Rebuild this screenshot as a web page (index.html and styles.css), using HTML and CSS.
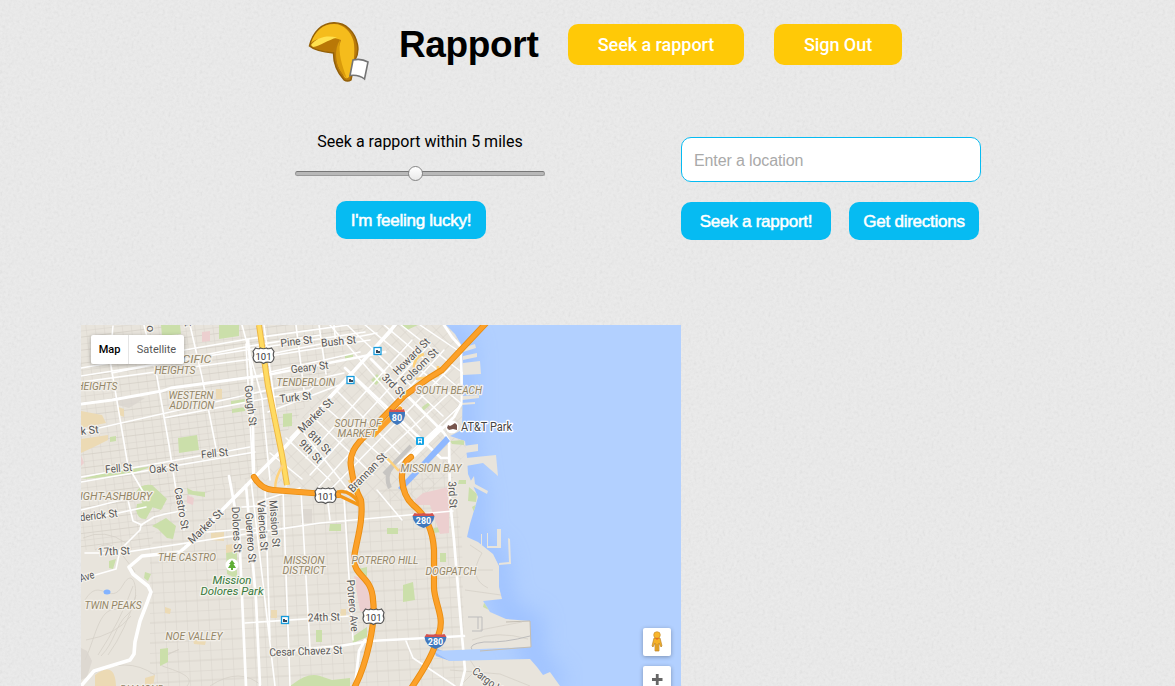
FILE: index.html
```html
<!DOCTYPE html>
<html lang="en">
<head>
<meta charset="utf-8">
<title>Rapport</title>
<link rel="stylesheet" href="styles.css">
</head>
<body>
<header class="header">
  <svg class="logo" viewBox="0 0 62 62" width="62" height="62">
    <path d="M1.500 25C5 11 14 1.800 26 1.800c12 0 21 9 23.500 22 1 6 0 11-2.500 15l-4 20q-3.500 2.500-7 0C28 50 25.500 42 25.500 32 16 31 6 29 1.500 25z" fill="#b97a0a" stroke="#936008" stroke-width="1.500"/>
    <path d="M3 22C7 10 15 3 26 3c10 0 17 8 19.500 17 2 9 .5 26-4.500 36-3 3-5 0-6-3-6-8-7-15-5-24l3-10C23 15 8 17 3 22z" fill="#f5bc1c"/>
    <path d="M2.500 24C10 18 20 16 31 19l-7 11C15 29 7 28 2.500 24z" fill="#b97807"/>
    <path d="M3 24C9 16 19 14 29 16.500 20 19 12 25 5 26z" fill="#ffe14f"/>
    <path d="M32 19C26 28 27 42 34 52l5 6C34 44 30 33 32 19z" fill="#d99b0b"/>
    <path d="M45 39Q53 37 60 41L56.500 58Q51 53.500 42 54.500z" fill="#fff" stroke="#747474" stroke-width="1.600"/>
  </svg>
  <h1 class="brand">Rapport</h1>
  <nav class="nav"><a class="nav-btn seek">Seek a rapport</a><a class="nav-btn out">Sign Out</a></nav>
</header>
<section class="controls">
  <div class="range-col">
    <p class="range-label">Seek a rapport within 5 miles</p>
    <div class="track"><div class="thumb"></div></div>
    <button class="btn lucky">I'm feeling lucky!</button>
  </div>
  <div class="place-col">
    <input class="place" placeholder="Enter a location">
    <div class="actions"><button class="btn wide">Seek a rapport!</button><button class="btn dir">Get directions</button></div>
  </div>
</section>
<main class="map">
<svg class="tiles" viewBox="81 325 600 361" width="600" height="361">
  <defs>
    <pattern id="gw" width="9" height="13" patternUnits="userSpaceOnUse" patternTransform="rotate(-7)"><path d="M0 0H9M0 6.500H9M0 0V13" class="minor"/></pattern>
    <pattern id="gs" width="11" height="20" patternUnits="userSpaceOnUse" patternTransform="rotate(-3)"><path d="M0 0H11M0 10H11M0 0V20" class="minor"/></pattern>
    <pattern id="gd" width="12" height="10" patternUnits="userSpaceOnUse" patternTransform="rotate(-44)"><path d="M0 0H12M0 0V10" class="minor"/></pattern>
    <filter id="soft" x="-20%" y="-20%" width="140%" height="140%"><feGaussianBlur stdDeviation="12"/></filter>
    <clipPath id="landclip"><path d="M81 325H446L455 334 462 346 463 374 462 430 450 436 465 441 467 457 468 474 478 497 476 504 470 524 467 537 478 542 493 554 499 566 499 587 502 599 483 601 490 612 506 619 530 621 531 647 433 651 450 661 530 659 537 667 543 675 550 672 560 686H81z"/></clipPath>
  </defs>
  <rect x="81" y="325" width="600" height="361" fill="#b2d0ff"/>
  <path d="M446 325L463 346V430L470 484 475 504 468 537 495 555 501 599 507 620 531 622 531 659 560 686" fill="none" stroke="#86b0ff" stroke-width="18" opacity=".6" filter="url(#soft)"/>
  <g fill="#e8e4dc">
    <path d="M81 325H446L455 334 462 346 463 374 462 430 450 436 465 441 467 457 468 474 478 497 476 504 470 524 467 537 478 542 493 554 499 566 499 587 502 599 483 601 490 612 506 619 530 621 531 647 433 651 450 661 530 659 537 667 543 675 550 672 560 686H81z"/>
    <path d="M462 348l13-4 1 4-13 4zM463 356l14-3v4l-14 3zM463 363l17-2 1 13-18 1zM462 396l17-1v3l-17 2zM461 403l14-1v2l-14 1zM463 446l15-2v7l-13 2zM466 458l30-3 2 21-15-13-17 3zM470 482l4-6 1 8 13 7-1 3-15-8z"/>
    <path d="M497 529h4v19h-14v-2h10zM481 534h1v13h-1zM487 533h1v13h-1zM508 538l2 1 1 25-12 1v-2l10-1z"/>
  </g>
  <path d="M530 621l1 26-51 4M506 622l24-1" fill="none" stroke="#c3bdb2"/>
  <g clip-path="url(#landclip)">
    <path d="M81 325H365L255 475 160 510 150 550H81z" fill="url(#gw)"/>
    <path d="M365 325H470V450L420 500 360 500 260 480z" fill="url(#gd)"/>
    <path d="M150 550L165 505 255 475 280 495 360 500 450 455 462 540 465 686H150z" fill="url(#gs)"/>
    <g fill="none" class="minor">
      <path d="M95 550q14-12 25 2t15 20M85 600c15-25 25 8 38-15s18 18 5 29-13 28-27 42M85 660c12-26 14-56 36-50M98 655q22-33 35-69M108 655q18-25 28-60M83 538q22-10 43 5M86 640q30-5 45-24M91 675q35-20 64 0M165 655c40-15-22 5 0 12s28 12 22 19M210 686q30-20 52 0M470 545l12 8q-15 25 6 35M465 570h28M465 590l36 5M480 630l42-8M472 640q25-10 56-1M470 660l15 22M450 670l50 4 30 12M460 686l20-20"/>
    </g>
    <path d="M468 617h14v14h-10M478 617v12M472 650q-4-6 12-8 20 1 46-6" fill="none" stroke="#bdbcbc"/>
    <g fill="#cbdfaa">
      <path d="M161 325h19l1 9-19 2zM219 325h20v11l-20 3zM178 438l19-3 2 15-20 3zM231 401l14-2v4l-14 2zM232 409l13-2v4l-13 2zM136 492q5-9 16-7l15 14-6 11-18-6zM137 504l19-3-10 18q-8 1-10-9zM152 526l14-8 10 8-3 13-6-1-9-9zM110 437l6-1v5l-6 1zM226 552l11-1v28l-10-5zM145 572l6 2-3 7-4-3zM109 561l7-2-3 10-4-1zM160 649l8-1v14l-8 4zM283 414l9-1v13l-9 1zM345 355l8-1v5l-8 2zM400 325h18l-11 5zM371 380l6-6 5 5-6 6zM330 524h11v7h-12zM387 528h11v6h-11zM403 585l10-3 2 18-12 2zM440 553h6v9h-6zM431 529l12-3v6l-11 1zM316 630h6v12h-6zM352 637l15-10v10l-14 6zM358 569l9-2v9h-8zM293 684q15-12 27-8l12 4 18-2v8h-60zM450 441l14-1v5l-12-1zM459 480h7v4h-8zM469 487l8 7-1 8-8-1zM477 504l-3 8-2-5zM422 407l7-5 1 3-7 6zM187 488l6 3 12 1v5l-17-3zM484 603l6 2 1 6-8-4z"/>
      <path d="M81 479l27-7 46-6-18 6-40 6z"/>
    </g>
    <g fill="#ecdab4"><path d="M81 411l21 4 4 8-25 5zM81 439l27-4v5l-12 6-15 7zM216 389h6v10h-6zM118 407l6 2v8l-5-2zM211 533l13-1v9l-13-1zM226 545l7-1v8l-7 1zM165 607l6 2-1 5-5-1zM193 640l13 1-1 4-11-1zM95 675q20-15 21 11H95zM145 678l10-3-2 11h-8zM271 610h6v8h-6zM341 609h5v7h-6z"/></g>
    <g fill="#eccfcf"><path d="M202 332l8-1v10l-8 1zM187 495l7 3-1 7-6-2zM415 500l8-7 26-6v46l-9 1-10-29h-15zM354 576l14 4 4 34-12-3zM81 455l3 8-3 3z"/></g>
    <path d="M81 648l6 3 5 10-5 16-6 3zM114 397l19-1 12 2-16 10-11-3zM302 509h10v14h-11z" fill="#d9d5ce" opacity=".8"/>
    <path d="M436 656L433 647 448 653 486 650V659L450 661z" fill="#95bdff"/>
    <g fill="none" stroke="#fff" stroke-linecap="round" stroke-linejoin="round">
      <g stroke-width="1.600">
        <path d="M81 368L248 339 348 325M81 376L246 350 365 332M81 382L245 360 370 340M112 373L250 346 320 335M113 326L110 360 128 466 148 500M144 325L157 377 169 445 176 490 184 530M190 325L202 377 216 448M246 344L253 478M242 325L262 398 270 480M264 325L286 486M164 418L310 390 324 378M81 432L344 373M296 325L304 390M319 325L326 374M334 325L336 346M275 353L377 333M261 374L360 352M268 412L342 384"/>
        <path d="M81 482L255 452M81 477L250 447M81 521L146 507M81 510L130 498M85 553H120L320 523 453 511M207 532L260 528M251 480L275 686M265 485L270 640M283 490L290 686M301 490L310 648M327 495L330 520M344 498L353 640M258 502L300 488M242 507L278 505M81 579L116 569 120 550 140 530 141 525 154 517 165 514 186 510M128 500L133 521 142 525M245 623L350 616M406 641L413 658 455 686"/>
      </g>
      <g stroke-width="1.500">
        <path d="M330 325L421 430M347 325L443 416M365 325L462 404M384 325L466 394M401 325L464 374M420 325L463 354M311 415L373 475M298 426L350 492M322 404L390 464M337 391L400 454M351 375L420 444M286 438L330 480M270 453L302 479M412 340L306 458M430 344L310 475M444 350L318 488M450 368L330 490M459 384L344 491M462 404L398 464M392 331L290 438M377 490L402 520"/>
      </g>
      <path d="M81 404L112 400 162 391 171 388 267 375 385 352" stroke-width="2.800"/>
      <path d="M81 686L94 671 130 660 134 654 135 642 140 621 147 603 151 592 148 586 133 574 129 567 142 556 180 552 188 545 232 500 285 447 391 330 395 325" stroke-width="3.600"/>
      <path d="M229 476L239 530 246 686M246 485L256 600 260 686M248 340L252 380 254 478M345 368L441 458H449M371 359L444 433M274 652L340 646 370 641 464 636M444 325L452 337 461 347 462 402 454 417 408 462M444 433L449 441 450 500 454 540 462 636 465 670 461 686M365 640L359 651 355 686" stroke-width="2.700"/>
      <path d="M440 428L413 455" stroke-width="5"/>
    </g>
    <path d="M384 474l27-28M390 488q-6-12 3-22" stroke="#c7c5c2" stroke-width="4" fill="none"/>
    <path d="M398 488L446 436 450 441 402 491z" fill="#8fb8ff"/>
    <g fill="none" stroke-linejoin="round">
      <path d="M259 325L268 386 282 455 287 485" stroke="#edb746" stroke-width="6"/>
      <path d="M259 325L268 386 282 455 287 485" stroke="#ffdb62" stroke-width="4"/>
      <path d="M275 490Q275 477 283 465M349 480L360 498 355 490 360 482M386 457L399 471M414 370Q413 357 424 354M416 379L438 376 438 366" stroke="#ffd27b" stroke-width="2.500"/>
    </g>
  </g>
  <g fill="none" stroke-linejoin="round" stroke-linecap="round">
    <path d="M488 321L442 370 429 378 404 396 368 433C354 446 349 455 351 467Q354 488 361 500C364 522 355 545 354 559C354 577 372 576 373 600C376 622 367 665 353 690M254 477Q261 489 273 490L338 495M411 457Q401 464 402 479Q403 496 413 505C427 516 433 533 434 550V587C434 602 445 617 439 633C435 651 425 668 410 690" stroke="#e98d11" stroke-width="6.200"/>
    <path d="M338 495L359 505M338 492Q348 489 359 502" stroke="#f39718" stroke-width="3.500"/>
    <path d="M488 321L442 370 429 378 404 396 368 433C354 446 349 455 351 467Q354 488 361 500C364 522 355 545 354 559C354 577 372 576 373 600C376 622 367 665 353 690M254 477Q261 489 273 490L338 495M411 457Q401 464 402 479Q403 496 413 505C427 516 433 533 434 550V587C434 602 445 617 439 633C435 651 425 668 410 690" stroke="#fca129" stroke-width="4.400"/>
    <path d="M374 435L400 409" stroke="#fca129" stroke-width="5"/>
  </g>
  <ellipse cx="107" cy="592" rx="3.500" ry="2.500" fill="#83b3ff"/>

  <g class="street">
    <text transform="translate(297 345) rotate(-7)" textLength="32" lengthAdjust="spacingAndGlyphs">Pine St</text>
    <text transform="translate(339 345) rotate(-6)" textLength="35" lengthAdjust="spacingAndGlyphs">Bush St</text>
    <text transform="translate(310 371) rotate(-7)" textLength="38" lengthAdjust="spacingAndGlyphs">Geary St</text>
    <text transform="translate(296 401) rotate(-6)" textLength="32" lengthAdjust="spacingAndGlyphs">Turk St</text>
    <text transform="translate(318 418) rotate(-44)" textLength="44" lengthAdjust="spacingAndGlyphs">Market St</text>
    <text transform="translate(317 445) rotate(45)" textLength="28" lengthAdjust="spacingAndGlyphs">8th St</text>
    <text transform="translate(308 454) rotate(45)" textLength="28" lengthAdjust="spacingAndGlyphs">9th St</text>
    <text transform="translate(414 359) rotate(-45)" textLength="47" lengthAdjust="spacingAndGlyphs">Howard St</text>
    <text transform="translate(422 369) rotate(-44)" textLength="47" lengthAdjust="spacingAndGlyphs">Folsom St</text>
    <text transform="translate(391 388) rotate(45)" textLength="28" lengthAdjust="spacingAndGlyphs">3rd St</text>
    <text transform="translate(370 475) rotate(-46)" textLength="50" lengthAdjust="spacingAndGlyphs">Brannan St</text>
    <text transform="translate(449 495) rotate(87)" textLength="27" lengthAdjust="spacingAndGlyphs">3rd St</text>
    <text transform="translate(247 406) rotate(83)" textLength="41" lengthAdjust="spacingAndGlyphs">Gough St</text>
    <text transform="translate(215 457) rotate(-6)" textLength="27" lengthAdjust="spacingAndGlyphs">Fell St</text>
    <text transform="translate(119 472) rotate(-5)" textLength="27" lengthAdjust="spacingAndGlyphs">Fell St</text>
    <text transform="translate(164 472) rotate(-5)" textLength="29" lengthAdjust="spacingAndGlyphs">Oak St</text>
    <text transform="translate(90 434) rotate(-6)" textLength="18" lengthAdjust="spacingAndGlyphs">k St</text>
    <text transform="translate(178 509) rotate(80)" textLength="42" lengthAdjust="spacingAndGlyphs">Castro St</text>
    <text transform="translate(208 529) rotate(-44)" textLength="44" lengthAdjust="spacingAndGlyphs">Market St</text>
    <text transform="translate(99 519) rotate(-7)" textLength="38" lengthAdjust="spacingAndGlyphs">derick St</text>
    <text transform="translate(114 555) rotate(-3)" textLength="32" lengthAdjust="spacingAndGlyphs">17th St</text>
    <text transform="translate(88 580) rotate(-18)" textLength="15" lengthAdjust="spacingAndGlyphs">Ave</text>
    <text transform="translate(233 530) rotate(87)" textLength="46" lengthAdjust="spacingAndGlyphs">Dolores St</text>
    <text transform="translate(247 538) rotate(86)" textLength="50" lengthAdjust="spacingAndGlyphs">Guerrero St</text>
    <text transform="translate(259 526) rotate(86)" textLength="50" lengthAdjust="spacingAndGlyphs">Valencia St</text>
    <text transform="translate(271 524) rotate(86)" textLength="47" lengthAdjust="spacingAndGlyphs">Mission St</text>
    <text transform="translate(324 621) rotate(-2)" textLength="32" lengthAdjust="spacingAndGlyphs">24th St</text>
    <text transform="translate(306 655) rotate(-2)" textLength="73" lengthAdjust="spacingAndGlyphs">Cesar Chavez St</text>
    <text transform="translate(349 606) rotate(85)" textLength="52" lengthAdjust="spacingAndGlyphs">Potrero Ave</text>
    <text transform="translate(485 683) rotate(37)" textLength="34" lengthAdjust="spacingAndGlyphs">Cargo V</text>
    <text transform="translate(147 327)  rotate(85)" textLength="11" lengthAdjust="spacingAndGlyphs">ro</text>
    <text transform="translate(185 325) rotate(85)" textLength="4">t</text>
  </g>
  <g class="area">
    <text x="193" y="363" textLength="37" lengthAdjust="spacingAndGlyphs">ACIFIC</text><text x="175" y="374" textLength="41" lengthAdjust="spacingAndGlyphs">HEIGHTS</text>
    <text x="97" y="390" textLength="41" lengthAdjust="spacingAndGlyphs">HEIGHTS</text>
    <text x="191" y="399" textLength="45" lengthAdjust="spacingAndGlyphs">WESTERN</text><text x="192" y="409" textLength="45" lengthAdjust="spacingAndGlyphs">ADDITION</text>
    <text x="306" y="386" textLength="59" lengthAdjust="spacingAndGlyphs">TENDERLOIN</text>
    <text x="449" y="394" textLength="66" lengthAdjust="spacingAndGlyphs">SOUTH BEACH</text>
    <text x="358" y="427" textLength="47" lengthAdjust="spacingAndGlyphs">SOUTH OF</text><text x="357" y="437" textLength="39" lengthAdjust="spacingAndGlyphs">MARKET</text>
    <text x="431" y="472" textLength="61" lengthAdjust="spacingAndGlyphs">MISSION BAY</text>
    <text x="116" y="500" textLength="72" lengthAdjust="spacingAndGlyphs">IGHT-ASHBURY</text>
    <text x="187" y="561" textLength="58" lengthAdjust="spacingAndGlyphs">THE CASTRO</text>
    <text x="113" y="609" textLength="57" lengthAdjust="spacingAndGlyphs">TWIN PEAKS</text>
    <text x="194" y="640" textLength="57" lengthAdjust="spacingAndGlyphs">NOE VALLEY</text>
    <text x="304" y="564" textLength="41" lengthAdjust="spacingAndGlyphs">MISSION</text><text x="304" y="574" textLength="43" lengthAdjust="spacingAndGlyphs">DISTRICT</text>
    <text x="385" y="564" textLength="67" lengthAdjust="spacingAndGlyphs">POTRERO HILL</text>
    <text x="451" y="575" textLength="51" lengthAdjust="spacingAndGlyphs">DOGPATCH</text>
    <text x="142" y="693" textLength="44" lengthAdjust="spacingAndGlyphs">DIAMOND</text>
  </g>
  <g class="park"><text x="232" y="584" textLength="39" lengthAdjust="spacingAndGlyphs">Mission</text><text x="232" y="595" textLength="63" lengthAdjust="spacingAndGlyphs">Dolores Park</text></g>
  <text class="poi" x="461" y="431" textLength="51" lengthAdjust="spacingAndGlyphs">AT&amp;T Park</text>

  <circle cx="452" cy="427" r="6.500" fill="#fff"/><path d="M448 425l2 1 2-1 3-2 2 2v5l-4-1-4 1-2-2z" fill="#76544c"/>
  <circle cx="232" cy="565" r="6.500" fill="#fff"/><path d="M232 560l3 4h-1.500l2.500 4h-3v2h-2v-2h-3l2.500-4H229z" fill="#5fae35"/>
  <g fill="#fff" stroke="#169bdc" stroke-width="1.300"><rect x="374" y="347.500" width="7" height="7"/><rect x="347" y="376.500" width="7" height="7"/><rect x="281.500" y="616.500" width="7" height="7"/></g>
  <path d="M376 350h2v1h2v2h-4zM349 379h2v1h2v2h-4zM283 619h2v1h2v2h-4z" fill="#38495b"/>
  <rect x="416" y="437" width="8" height="8" rx="1" fill="#16a5e6"/><path d="M418 438.500h4v5h-1v-1h-2v1h-1z" fill="#fff"/><path d="M418.700 439.500h2.600v1.500h-2.600z" fill="#16a5e6"/>

  <g class="us">
    <g transform="translate(263.500 355.500)"><path d="M-8-7.500Q-5-6-3-7.500 0-6 3-7.500 5-6 8-7.500L10.500-4Q9-1 10.500 2 10 6 7 7 3 6 0 8-3 6-7 7-10 6-10.500 2-9-1-10.500-4z"/><text y="4">101</text></g>
    <g transform="translate(325.500 495.500)"><path d="M-8-7.500Q-5-6-3-7.500 0-6 3-7.500 5-6 8-7.500L10.500-4Q9-1 10.500 2 10 6 7 7 3 6 0 8-3 6-7 7-10 6-10.500 2-9-1-10.500-4z"/><text y="4">101</text></g>
    <g transform="translate(373.500 616.500)"><path d="M-8-7.500Q-5-6-3-7.500 0-6 3-7.500 5-6 8-7.500L10.500-4Q9-1 10.500 2 10 6 7 7 3 6 0 8-3 6-7 7-10 6-10.500 2-9-1-10.500-4z"/><text y="4">101</text></g>
  </g>
  <g class="interstate">
    <g transform="translate(397 417)"><path class="shield" d="M-8-5H8Q9 4 0 8-9 4-8-5z"/><path class="cap" d="M-7-8Q-3-6 0-8 3-6 7-8L8-5H-8z"/><text y="4">80</text></g>
    <g transform="translate(423.500 520)"><path class="shield" d="M-11-4H11Q10 5 0 8-10 5-11-4z"/><path class="cap" d="M-9-7Q-4-6 0-7 4-6 9-7L11-4H-11z"/><text y="4">280</text></g>
    <g transform="translate(435.500 641)"><path class="shield" d="M-11-4H11Q10 5 0 8-10 5-11-4z"/><path class="cap" d="M-9-7Q-4-6 0-7 4-6 9-7L11-4H-11z"/><text y="4">280</text></g>
  </g>
</svg>
  <div class="map-type"><span class="type active">Map</span><span class="type sat">Satellite</span></div>
  <div class="map-tools">
    <div class="tool"><svg viewBox="0 0 28 28" width="28" height="28"><path d="M11 10h6l2 8-1 1-2-4v8h-4v-8l-2 4-1-1z" fill="#f5b126" stroke="#b9822b" stroke-width=".7"/><circle cx="14" cy="7" r="3.300" fill="#f9b62c" stroke="#c18526" stroke-width=".6"/><path d="M12 10l2 2 2-2z" fill="#e56c20"/><path d="M14 16v7" stroke="#c18526" stroke-width=".8"/></svg></div>
    <div class="tool"><svg viewBox="0 0 28 28" width="28" height="28"><path d="M9 13.500H19.500M14.250 8V19" stroke="#666" stroke-width="2.800"/></svg></div>
  </div>
</main>
</body>
</html>
```
FILE: styles.css
```css
* { box-sizing: border-box; }
html { height: 100%; overflow: hidden; }
body {
  margin: 0;
  height: 686px;
  overflow: hidden;
  background: #e5e5e5 url("data:image/svg+xml,%3Csvg xmlns='http://www.w3.org/2000/svg' width='200' height='200'%3E%3Cfilter id='n' x='0' y='0' width='1' height='1'%3E%3CfeTurbulence type='fractalNoise' baseFrequency='.35' numOctaves='3' stitchTiles='stitch'/%3E%3CfeColorMatrix type='saturate' values='0'/%3E%3C/filter%3E%3Crect width='200' height='200' fill='%23ececec'/%3E%3Crect width='200' height='200' filter='url(%23n)' opacity='.16'/%3E%3C/svg%3E");
  font-family: Roboto, "Liberation Sans", sans-serif;
  color: #000;
}
.header { display: flex; align-items: flex-start; height: 137px; padding: 21px 0 0 308px; }
.logo { flex: none; }
.brand { width: 139px; margin: 2px 0 0 29px; font: bold 37px/44px "Liberation Sans", sans-serif; letter-spacing: -.35px; white-space: nowrap; }
.nav { display: flex; gap: 30px; margin: 3px 0 0 30px; }
.nav-btn {
  height: 41px;
  border-radius: 10px;
  background: #ffc907;
  color: #fff;
  font-size: 18px;
  font-weight: 500;
  line-height: 41px;
  letter-spacing: -.05px;
  text-align: center;
  white-space: nowrap;
}
.seek { width: 176px; }
.out { width: 128px; }
.controls { display: flex; gap: 136px; height: 188px; padding-left: 295px; }
.range-col { display: flex; flex-direction: column; align-items: center; width: 250px; margin-top: -6px; }
.range-label { margin: 0; font-size: 16px; line-height: 21px; white-space: nowrap; }
.track {
  display: flex;
  align-items: center;
  width: 250px;
  height: 5px;
  margin: 19px 0 25px;
  padding-left: 112px;
  border: 1px solid #999;
  border-top-color: #777;
  border-radius: 3px;
  background: #b8b8b8;
}
.thumb { flex: none; width: 15px; height: 15px; border: 1px solid #858585; border-radius: 50%; background: linear-gradient(#fff, #e9e9e9); }
.btn {
  height: 38px;
  padding: 0;
  border: 0;
  border-radius: 10px;
  background: #06bbf2;
  color: #fff;
  font: 17px/38px "Liberation Sans", sans-serif;
  letter-spacing: -.25px;
  -webkit-text-stroke: .5px #fff;
  white-space: nowrap;
}
.lucky, .wide { width: 150px; }
.lucky { align-self: flex-start; margin-left: 41px; padding-top: 1px; }
.dir { width: 130px; }
.place-col { width: 300px; }
.place {
  display: block;
  width: 300px;
  height: 45px;
  margin: 0;
  padding: 2px 12px 0;
  border: 1px solid #06bbf2;
  border-radius: 10px;
  background: #fff;
  font: 16px "Liberation Sans", sans-serif;
  letter-spacing: -.12px;
}
.place::placeholder { color: #a9a9a9; }
.actions { display: flex; gap: 18px; margin-top: 20px; }
.actions .btn { padding-top: 1px; }
.map { position: relative; width: 600px; height: 361px; margin-left: 81px; overflow: hidden; }
.tiles { display: block; font-family: Roboto, sans-serif; }
.minor { fill: none; stroke: #d6d1c8; stroke-width: .8; }
.tiles text { text-anchor: middle; paint-order: stroke; stroke-linejoin: round; }
.street text { fill: #555; stroke: #f5f2ec; stroke-width: 2.5px; font-size: 11px; }
.area text { fill: #948667; stroke: #f2efe9; stroke-width: 2.5px; font-size: 10.5px; font-style: italic; }
.park text { fill: #39793d; stroke: #f5f5ed; stroke-width: 2.5px; font-size: 11.5px; font-style: italic; }
.tiles .poi { text-anchor: start; fill: #444; stroke: #fff; stroke-width: 2.5px; font-size: 12px; }
.us path { fill: #fff; stroke: #555; stroke-width: 1.2; }
.us text { fill: #333; font-size: 9.5px; }
.shield { fill: #4078bd; }
.cap { fill: #d35351; }
.interstate text { fill: #fff; font-size: 9px; font-weight: bold; }
.map-type {
  position: absolute;
  top: 10px;
  left: 10px;
  display: flex;
  height: 29px;
  border-radius: 2px;
  background: #fff;
  box-shadow: 0 1px 4px rgba(0, 0, 0, .3);
  font-size: 11px;
  line-height: 29px;
}
.type { width: 37px; text-align: center; }
.active { font-weight: 500; }
.sat { width: 56px; border-left: 1px solid #e5e5e5; color: #565656; }
.map-tools { position: absolute; right: 10px; top: 303px; display: flex; flex-direction: column; gap: 10px; }
.tool { width: 28px; height: 28px; border-radius: 2px; background: #fff; box-shadow: 0 1px 4px rgba(0, 0, 0, .3); }
.tool svg { display: block; }
```
